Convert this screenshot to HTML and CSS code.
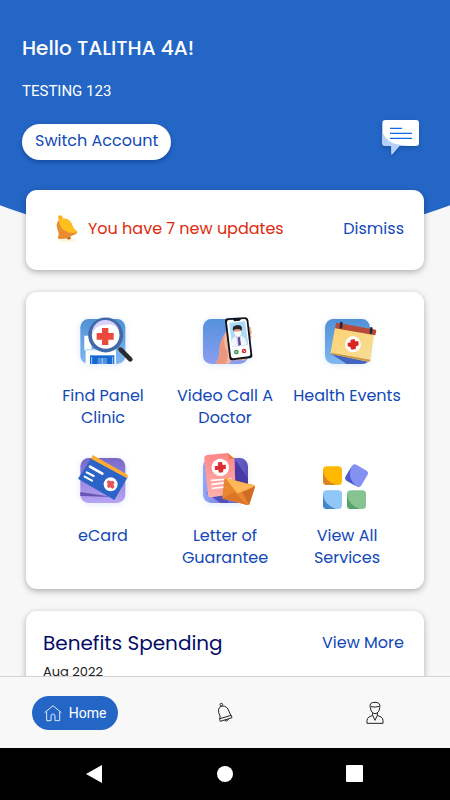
FILE: index.html
```html
<!DOCTYPE html>
<html lang="en">
<head>
<meta charset="utf-8">
<meta name="viewport" content="width=device-width, initial-scale=1">
<title>Home</title>
<link rel="stylesheet" href="styles.css">
</head>
<body>
<main class="content">
  <header class="hero">
    <h1 class="hello">Hello TALITHA 4A!</h1>
    <p class="company">TESTING 123</p>
    <div class="hero-actions">
      <button class="switch" type="button">Switch Account</button>
      <button class="chat" type="button" aria-label="Messages">
        <svg width="60" height="50" viewBox="0 0 180 150">
          <path d="M46 30H138Q147 30 147 39V99Q147 108 138 108H88L65 134L64 108H46Q37 108 37 99V39Q37 30 46 30Z" fill="#fff"/>
          <path d="M37 62Q46 98 88 104Q110 108 138 108H88L65 134L64 108H46Q37 108 37 99Z" fill="#b3cffa"/>
          <path d="M60 55H96M60 70H126M60 85H126" stroke="#1768e5" stroke-width="4"/>
        </svg>
      </button>
    </div>
  </header>

  <section class="card notice">
    <svg class="notice-icon" width="30" height="34" viewBox="27 20 90 102">
      <ellipse cx="66" cy="104" rx="28" ry="7" fill="#fff6e0"/>
      <circle cx="46" cy="37" r="7" fill="#f9b320"/>
      <path d="M64 97L76 93Q80 101 72 103Q65 102 64 97Z" fill="#c76a1c"/>
      <path d="M40 46Q49 36 65 41Q77 45 82 61Q86 72 97 79Q97 85 91 87L60 100L42 101L38 97Q44 87 37 71Q32 55 40 46Z" fill="#ea8d31"/>
      <path d="M42 45Q51 37 65 41Q77 45 82 61Q86 72 97 79Q87 86 69 81Q43 72 42 45Z" fill="#ffc01f"/>
    </svg>
    <p class="notice-text">You have 7 new updates</p>
    <button class="link dismiss" type="button">Dismiss</button>
  </section>

  <nav class="card services" aria-label="Services">
    <a class="service" href="#clinic">
      <svg width="80" height="70" viewBox="-6 0 240 210">
        <defs>
          <linearGradient id="sky" x1="0" y1="0" x2="0" y2="1"><stop offset="0" stop-color="#5090d6"/><stop offset="1" stop-color="#80b8f2"/></linearGradient>
          <linearGradient id="peri" x1="0" y1="0" x2="0" y2="1"><stop offset="0" stop-color="#5492dc"/><stop offset="1" stop-color="#8c9df0"/></linearGradient>
          <linearGradient id="violet" x1="0" y1="0" x2="0" y2="1"><stop offset="0" stop-color="#7967c9"/><stop offset="1" stop-color="#b7a5f4"/></linearGradient>
          <linearGradient id="indigo" x1="0" y1="0" x2="1" y2="0"><stop offset="0" stop-color="#91a6fa"/><stop offset="1" stop-color="#5b4cb7"/></linearGradient>
          <linearGradient id="paper" x1="0" y1="0" x2="0" y2="1"><stop offset="0" stop-color="#ff8587"/><stop offset="1" stop-color="#ffb1ad"/></linearGradient>
          <linearGradient id="sand" x1="0" y1="0" x2="1" y2="1"><stop offset="0" stop-color="#ffd371"/><stop offset="1" stop-color="#f6dd98"/></linearGradient>
        </defs>
        <rect class="glow" x="46" y="44" width="135" height="135" rx="28"/>
        <rect x="46" y="42" width="135" height="135" rx="25" fill="url(#sky)"/>
        <path d="M58 92H80V132H153V177H62V136H58Z" fill="#fff"/>
        <path d="M62 134H154" stroke="#b9d8fa" stroke-width="4"/>
        <path d="M75 177V151H148V177Z" fill="#1769d2"/>
        <path d="M80 156V177M143 156V177" stroke="#a9cbf8" stroke-width="3"/>
        <path d="M98 159H126V177H98Z" fill="#4f92df"/><path d="M112 159V177" stroke="#d7e8ff" stroke-width="2"/>
        <path d="M155 124L169 136" stroke="#64789e" stroke-width="9"/>
        <path d="M167 134L196 163" stroke="#292c2f" stroke-width="14" stroke-linecap="round"/>
        <circle cx="122" cy="90" r="47" fill="#fff" stroke="#4069a7" stroke-width="11"/>
        <path d="M81 88A41 41 0 0 1 162 77Q146 53 122 59Q90 60 81 88Z" fill="#d8d2fa"/>
        <path d="M111 69H130V84H146V104H130V120H111V104H95V84H111Z" fill="#eb493e"/>
      </svg>
      <span>Find Panel Clinic</span>
    </a>
    <a class="service" href="#video">
      <svg width="80" height="70" viewBox="-15 0 240 210">
        <rect class="glow" x="39" y="44" width="135" height="135" rx="28"/>
        <rect x="39" y="42" width="135" height="135" rx="25" fill="url(#peri)"/>
        <path d="M77 175Q91 157 88 132Q91 106 107 81L111 69Q121 79 116 101L174 142L165 166L126 166L117 176Z" fill="#f4b79e"/>
        <path d="M77 175Q91 157 88 132Q91 106 104 88Q98 123 112 142Q115 160 106 177Z" fill="#ec967d"/>
        <path d="M173 66Q186 63 182 75Q188 80 182 90Q188 98 179 106Z" fill="#f2a58b"/>
        <path d="M113 40L165 37Q173 37 175 46L187 151Q188 159 179 160L127 166Q119 167 118 158L105 50Q104 41 113 40Z" fill="#11151d"/>
        <path d="M116 45L129 44L133 49L149 47L153 43L163 42Q169 42 170 49L181 147Q182 153 175 154L130 160Q124 160 123 154L111 53Q110 46 116 45Z" fill="#fff"/>
        <path d="M118 54L165 49L175 120L126 125Z" fill="#acdcf5"/>
        <path d="M123 124Q122 102 134 95L154 92Q168 98 170 119Z" fill="#f4f6fd"/>
        <path d="M138 92L152 91L151 119L144 124Z" fill="#a9c7eb"/><path d="M144 97L149 96L153 119L146 123Z" fill="#68438f"/>
        <path d="M131 72Q140 64 153 71Q156 93 143 97Q132 94 131 72Z" fill="#d79b83"/>
        <path d="M130 79Q124 63 139 61Q153 57 156 68L155 77L148 72L134 73Z" fill="#25242f"/>
        <path d="M132 80L154 79Q155 94 144 96Q134 93 132 80Z" fill="#fff"/>
        <circle cx="139" cy="141" r="7" fill="#289650"/><circle cx="162" cy="138" r="7" fill="#d82f36"/>
        <path d="M136 141L142 141M160 136L165 141" stroke="#fff" stroke-width="3"/>
      </svg>
      <span>Video Call A Doctor</span>
    </a>
    <a class="service" href="#events">
      <svg width="80" height="70" viewBox="-8 0 240 210">
        <rect class="glow" x="46" y="44" width="135" height="135" rx="28"/>
        <rect x="46" y="42" width="135" height="135" rx="25" fill="url(#sky)"/>
        <path d="M64 146L181 130V152Q181 177 156 177H111Z" fill="#4465bf"/>
        <path d="M76 68L193 88L182 169Q180 172 174 170L66 147Q62 145 63 141Z" fill="url(#sand)"/>
        <path d="M64 143L181 164L180 170L66 148Z" fill="#c59648"/>
        <path d="M82 53L199 74Q201 76 199 81L197 91L76 70L79 56Q80 53 82 53Z" fill="#b84a38"/>
        <path d="M95 54L94 67M185 70L184 83" stroke="#222938" stroke-width="8" stroke-linecap="round"/>
        <circle cx="130" cy="118" r="24" fill="#fff"/>
        <path d="M122 105L134 102L137 109L146 109L147 121L139 124L138 132L125 134L122 126L114 124L114 114L123 112Z" fill="#dc2421"/>
      </svg>
      <span>Health Events</span>
    </a>
    <a class="service" href="#ecard">
      <svg width="80" height="70" viewBox="-6 0 240 210">
        <rect class="glow" x="46" y="41" width="135" height="135" rx="28"/>
        <rect x="46" y="39" width="135" height="135" rx="25" fill="url(#violet)"/>
        <path d="M46 141L143 156L46 153Z" fill="#6655b4"/>
        <path d="M79 39L188 97L148 165L39 101Z" fill="#2b64c6"/>
        <path d="M83 30L189 90L186 100L78 41Z" fill="#ffad32"/>
        <path d="M75 65L112 86" stroke="#fff" stroke-width="8" stroke-linecap="round"/>
        <path d="M65 82L86 93M59 95L81 107" stroke="#fff" stroke-width="6" stroke-linecap="round"/>
        <circle cx="137" cy="118" r="21" fill="#fff"/>
        <path d="M129 106L138 109L144 107L149 114L145 119L149 126L142 131L136 127L129 129L126 121L129 117L125 112Z" fill="#e95358"/>
      </svg>
      <span>eCard</span>
    </a>
    <a class="service" href="#letter">
      <svg width="80" height="70" viewBox="-15 0 240 210">
        <rect class="glow" x="39" y="41" width="135" height="135" rx="28"/>
        <rect x="39" y="39" width="135" height="135" rx="25" fill="url(#indigo)"/>
        <path d="M137 45L173 100V140H130Z" fill="#4939a5"/>
        <path d="M47 142L105 152L117 174H91Z" fill="#5550b5"/>
        <path d="M52 30L113 24L133 41L137 141Q137 146 131 147L63 157Q55 158 54 149L43 43Q42 31 52 30Z" fill="url(#paper)"/>
        <path d="M113 24L133 41L116 42Z" fill="#eb8134"/>
        <circle cx="91" cy="67" r="26" fill="#fff"/>
        <path d="M84 52L96 51L98 60L107 59L108 71L100 73L99 82L87 83L85 75L75 75L74 64L84 62Z" fill="#df2d31"/>
        <path d="M64 106L123 102M66 118L108 113M67 130L104 126" stroke="#fff" stroke-width="5" stroke-linecap="round"/>
        <path d="M107 99L193 121Q196 122 195 126L178 178Q176 181 171 180L99 161Q95 159 97 155L103 102Q104 99 107 99Z" fill="#e8872e"/>
        <path d="M106 99L195 123L148 143Q142 146 138 140Z" fill="#ffb75a"/>
        <path d="M195 125L157 142L177 180Z" fill="#cf6b27"/><path d="M98 160L132 141L173 180Z" fill="#dc742a"/>
      </svg>
      <span>Letter of Guarantee</span>
    </a>
    <a class="service" href="#all">
      <svg width="80" height="70" viewBox="-6 0 240 210">
        <rect x="42" y="64" width="57" height="56" rx="11" fill="#ffb900"/><path d="M42 75Q45 107 80 120H53Q42 120 42 109Z" fill="#d98527"/>
        <g transform="rotate(30 143 92)"><rect x="116" y="64" width="54" height="56" rx="10" fill="#8490f2"/><path d="M116 74Q118 111 158 120H126Q116 120 116 110Z" fill="#4a59cc"/></g>
        <rect x="42" y="136" width="57" height="56" rx="11" fill="#91c6f8"/><path d="M42 147Q45 179 80 192H53Q42 192 42 181Z" fill="#4588c7"/>
        <rect x="114" y="136" width="57" height="56" rx="11" fill="#87c391"/><path d="M114 147Q117 179 152 192H125Q114 192 114 181Z" fill="#57a26b"/>
      </svg>
      <span>View All Services</span>
    </a>
  </nav>

  <section class="card benefits">
    <div class="benefits-head">
      <h2>Benefits Spending</h2>
      <a class="link" href="#benefits">View More</a>
    </div>
    <p class="month">Aug 2022</p>
  </section>
</main>

<nav class="tabs" aria-label="Main">
  <a class="tab tab-active" href="#home">
    <svg width="18" height="18" viewBox="0 0 54 54" fill="none" stroke="#dce9ff" stroke-width="3">
      <path d="M2 26L27 5L52 26M8 23V50H21V36Q21 30 27 30Q33 30 33 36V50H47V23"/>
    </svg>
    <span>Home</span>
  </a>
  <a class="tab" href="#updates" aria-label="Updates">
    <svg width="20" height="22" viewBox="47 52 60 66" fill="none" stroke="#222" stroke-width="3">
      <circle cx="66" cy="60" r="4"/>
      <path d="M63 66Q77 60 86 73Q92 89 96 93L98 99L63 110L61 104Q65 94 58 84Q55 72 63 66ZM62 102L95 92M76 107Q82 114 88 103"/>
    </svg>
  </a>
  <a class="tab" href="#profile" aria-label="Profile">
    <svg width="20" height="24" viewBox="495 46 60 72" fill="none" stroke="#222" stroke-width="3">
      <path d="M511 66Q506 50 525 50Q543 50 539 66Q538 82 525 84Q513 82 511 66ZM512 63Q526 66 538 62M518 82V89L525 104L532 89V82M518 89L507 94Q501 97 501 105V113H549V105Q549 97 543 94L532 89"/>
    </svg>
  </a>
</nav>

<footer class="system">
  <button type="button" aria-label="Back"><svg width="18" height="18" viewBox="0 0 18 18"><path d="M0 9L16 0V18Z"/></svg></button>
  <button type="button" aria-label="Home screen"><svg width="18" height="18" viewBox="0 0 18 18"><circle cx="9" cy="9" r="8"/></svg></button>
  <button type="button" aria-label="Recent apps"><svg width="18" height="18" viewBox="0 0 18 18"><rect width="17" height="17" rx="1"/></svg></button>
</footer>
</body>
</html>
```
FILE: styles.css
```css
* {
  box-sizing: border-box;
}

body {
  margin: 0;
  height: 100vh;
  display: flex;
  flex-direction: column;
  background: #f7f7f7;
  font-family: Poppins, Inter, "Liberation Sans", sans-serif;
  font-size: 16px;
  line-height: 22px;
}

h1, h2, p {
  margin: 0;
  font-weight: 400;
}

button {
  border: 0;
  padding: 0;
  background: none;
  font: inherit;
  cursor: pointer;
}

a {
  text-decoration: none;
}

svg {
  display: block;
  flex: none;
}

.content {
  flex: 1;
  min-height: 0;
  overflow: hidden;
  background: radial-gradient(circle 650px at 50% -404px, #2466c6 649px, #f7f7f7 650px);
}

.hero {
  padding: 36px 20px 24px 22px;
  color: #fff;
}

.hello {
  font-size: 20px;
  line-height: 24px;
  font-weight: 500;
}

.company {
  margin-top: 20px;
  font-family: Roboto, sans-serif;
  font-size: 15px;
}

.hero-actions {
  display: flex;
  justify-content: space-between;
  align-items: flex-start;
  margin-top: 8px;
  height: 56px;
}

.switch {
  height: 36px;
  margin-top: 14px;
  padding: 0 13px 2px;
  border-radius: 18px;
  background: #fff;
  color: #1248b8;
  box-shadow: 0 2px 4px rgba(0, 20, 80, 0.35);
}

.chat svg {
  filter: drop-shadow(0 2px 2px rgba(0, 20, 80, 0.25));
}

.card {
  margin: 0 26px 22px;
  border-radius: 11px;
  background: #fff;
  box-shadow: 0 2px 6px rgba(0, 0, 0, 0.3);
}

.notice {
  display: flex;
  align-items: center;
  height: 80px;
  padding: 0 20px 2px 28px;
}

.notice-text {
  flex: 1;
  margin-left: 4px;
  color: #e12a0c;
}

.link {
  color: #1248b8;
}

.services {
  display: grid;
  grid-template-columns: repeat(3, 1fr);
  row-gap: 16px;
  padding: 13px 16px 20px;
}

.service {
  display: flex;
  flex-direction: column;
  align-items: center;
  gap: 10px;
  color: #1248b8;
  text-align: center;
}

.service span {
  max-width: 112px;
}

.glow {
  fill: #b9cdf5;
  opacity: 0.5;
  filter: blur(10px);
}

.benefits {
  padding: 20px 20px 20px 17px;
}

.benefits-head {
  display: flex;
  justify-content: space-between;
  align-items: center;
}

.benefits-head h2 {
  color: #050c66;
  font-size: 20px;
  line-height: 24px;
}

.month {
  margin-top: 6px;
  color: #222;
  font-size: 13px;
}

.tabs {
  flex: none;
  display: grid;
  grid-template-columns: repeat(3, 1fr);
  place-items: center;
  height: 72px;
  border-top: 1px solid #d5d5d5;
  background: #f8f8f8;
}

.tab-active {
  display: flex;
  align-items: center;
  gap: 7px;
  height: 34px;
  padding: 0 12px;
  border-radius: 17px;
  background: #2466c6;
  color: #fff;
  font-family: Roboto, sans-serif;
  font-size: 14px;
}

.system {
  flex: none;
  display: grid;
  grid-template-columns: repeat(3, 1fr);
  place-items: center;
  height: 52px;
  padding: 0 30px;
  background: #000;
  fill: #fff;
}
```
